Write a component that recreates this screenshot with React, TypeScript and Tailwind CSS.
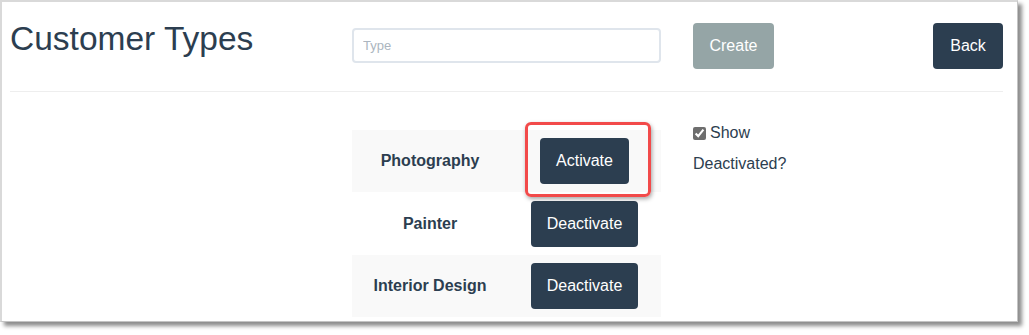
const rows = [
  { name: 'Photography', action: 'Activate', striped: true },
  { name: 'Painter', action: 'Deactivate', striped: false },
  { name: 'Interior Design', action: 'Deactivate', striped: true },
];

export default function App() {
  return (
    <div className="w-[1029px] h-[335px] bg-white font-['Liberation_Sans',Arial,sans-serif] text-[#2c3e50]">
      <div className="w-[1018px] h-[322px] overflow-hidden bg-white border-t-2 border-l-2 border-r border-b border-t-[#d9d9d9] border-l-[#d9d9d9] border-r-[#c4c4c4] border-b-[#c4c4c4] shadow-[4px_4px_4px_rgba(0,0,0,0.45)] pl-[8px] pr-[14px] pt-[17px]">
        {/* header */}
        <div className="flex items-start">
          <h1 className="w-[342px] mt-[2px] text-[33.5px] leading-[36px] font-normal">Customer Types</h1>
          <input
            type="text"
            placeholder="Type"
            className="mt-[9px] w-[309px] h-[35px] rounded-[4px] border-2 border-[#dfe5ec] bg-white pl-[9px] text-[13px] text-[#2c3e50] placeholder:text-[#acb6c0] outline-none"
          />
          <button className="ml-[32px] mt-[4px] h-[46px] w-[81px] rounded-[4px] bg-[#95a5a6] text-[16px] leading-[20px] text-white">
            Create
          </button>
          <button className="ml-auto mt-[4px] h-[46px] w-[70px] rounded-[4px] bg-[#2c3e50] text-[16px] leading-[20px] text-white">
            Back
          </button>
        </div>

        <div className="mt-[22px] h-px bg-[#eeeeee]" />

        {/* body */}
        <div className="mt-[38px] flex items-start">
          <div className="w-[342px] shrink-0" />
          <div className="relative w-[309px] shrink-0">
            {rows.map((row, i) => (
              <div
                key={row.name}
                className={`flex items-center ${i === 1 ? 'h-[63px] bg-white' : 'h-[62px] bg-[#f9f9f9]'}`}
              >
                <div className="w-[156px] text-center text-[16px] leading-[20px] font-bold">{row.name}</div>
                <div className="flex flex-1 justify-center">
                  <button className="h-[46px] rounded-[4px] bg-[#2c3e50] px-[16px] text-[16px] leading-[20px] text-white">
                    {row.action}
                  </button>
                </div>
              </div>
            ))}
            <div className="pointer-events-none absolute left-[173px] top-[-8px] h-[75px] w-[126px] rounded-[6px] border-[3px] border-[#f24a4a] shadow-[1px_2px_4px_rgba(0,0,0,0.35)]" />
          </div>
          <div className="ml-[32px] -mt-[7px]">
            <label className="flex h-[20px] items-center gap-[4px] text-[16px] leading-[20px]">
              <input type="checkbox" defaultChecked className="m-0 h-[13px] w-[13px] accent-[#6e6e6e]" />
              Show
            </label>
            <div className="mt-[11px] text-[16px] leading-[20px]">Deactivated?</div>
          </div>
        </div>
      </div>
    </div>
  );
}
